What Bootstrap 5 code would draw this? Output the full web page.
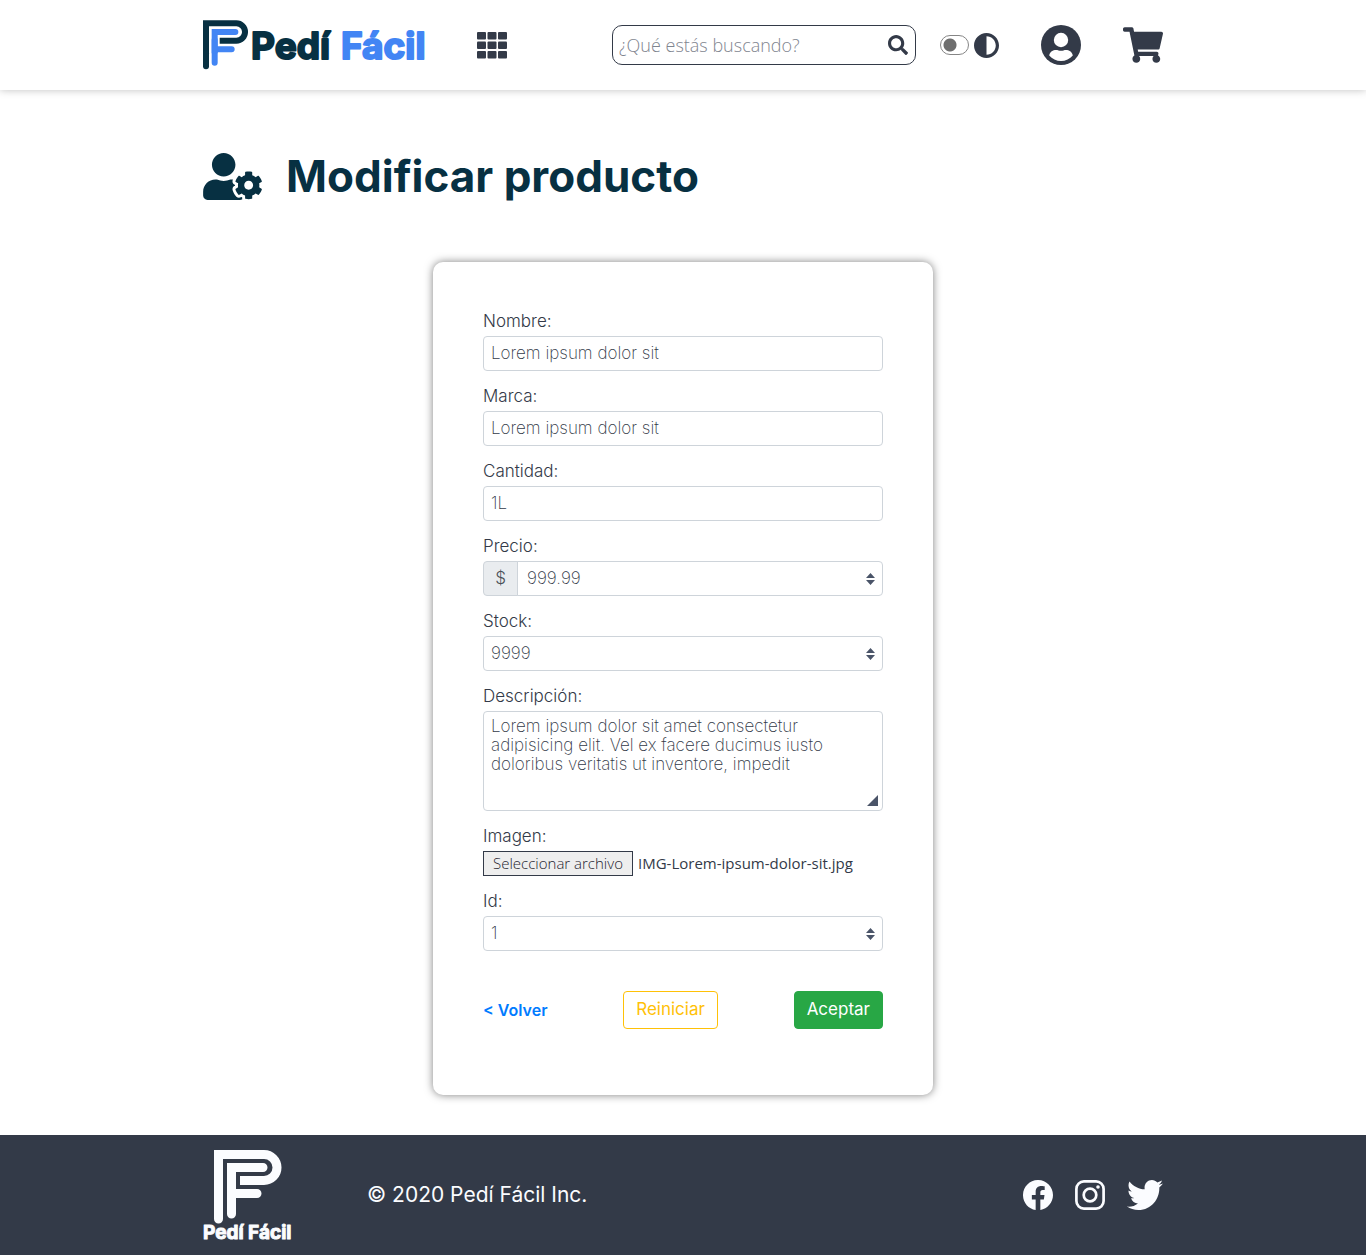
<!DOCTYPE html>
<html lang="es">
<head>
<meta charset="utf-8">
<meta name="viewport" content="width=device-width, initial-scale=1">
<title>Modificar producto - Pedí Fácil</title>
<link href="https://cdn.jsdelivr.net/npm/bootstrap@5.3.0/dist/css/bootstrap.min.css" rel="stylesheet">
<style>
  :root { --ink: #333a48; --navy: #073042; --brand: #4285f4; --paper: #fbfcff; }
  body { font-family: Inter, "Open Sans", sans-serif; font-size: 17px; color: var(--ink); background: #fff; }
  svg { display: block; flex: none; }
  .page-width { width: 100%; max-width: 984px; padding-inline: 12px; margin-inline: auto; }
  .site-header { min-height: 90px; box-shadow: 0 0 8px rgba(0,0,0,.25); }
  .site-header a, .site-header button { color: var(--ink); }
  .plain-btn { border: 0; background: none; padding: 0; }
  .wordmark { font-family: Inter, sans-serif; font-weight: 700; stroke-linejoin: round; }
  .search-box { width: 304px; height: 40px; border: 1px solid var(--ink); border-radius: 10px; padding: 0 7px 0 6px; }
  .search-box input { border: 0; outline: 0; background: none; min-width: 0; font-family: "Open Sans", sans-serif; font-weight: 300; font-size: 18px; padding: 0; }
  .search-box input::placeholder { color: #7f858f; opacity: 1; }
  .header-tools { gap: 42px; }
  .theme-toggle { gap: 5px; }
  .theme-toggle input { appearance: none; width: 29px; height: 20px; margin: 0; border: 1px solid #858585; border-radius: 10px; background: radial-gradient(circle at 9px 9px, #6e6e6e 6px, transparent 7px); }
  .page-title { color: var(--navy); gap: 24px; padding: 60px 0; }
  .page-title h1 { font-size: 44px; line-height: 52px; font-weight: 700; font-variant-ligatures: none; }
  .product-form { max-width: 500px; border-radius: 10px; padding: 49px 50px 66px; box-shadow: 0 0 8px rgba(0,0,0,.5); margin: 0 auto 40px; }
  .field { margin-bottom: 15px; }
  .field > label, .field-label { display: block; line-height: 21px; padding-bottom: 4px; font-weight: 300; }
  .field .form-control { height: 35px; padding: 0 7px 2px; border-color: #ced4da; border-radius: 4px; font-weight: 200; font-size: 17px; line-height: 19px; color: var(--ink); }
  .field textarea.form-control { height: 100px; padding-block: 5px; resize: none; display: block; }
  .field .input-group-text { width: 35px; padding: 0; justify-content: center; background: #e9ecef; border-color: #ced4da; border-radius: 4px; font-size: 17px; font-weight: 300; color: #495057; }
  .field .price-input { padding-left: 9px; border-radius: 0 4px 4px 0 !important; }
  input[type=number] { appearance: textfield; -moz-appearance: textfield; }
  input[type=number]::-webkit-inner-spin-button { appearance: none; margin: 0; }
  .stepper { position: absolute; right: 8px; top: 12px; z-index: 6; pointer-events: none; }
  .grip { position: absolute; right: 5px; bottom: 5px; pointer-events: none; }
  .file-row { font-family: "Open Sans", sans-serif; font-size: 15px; line-height: 23px; gap: 5px; }
  .file-row label { width: 150px; text-align: center; border: 1px solid var(--ink); background: #eee; font-weight: 300; color: #1f2530; white-space: nowrap; }
  .form-actions { margin-top: 40px; }
  .form-actions a { color: #007bff; font-weight: 600; font-size: 16px; text-decoration: none; }
  .form-actions .btn { height: 38px; padding: 0 12px 1px; border-radius: 4px; font-size: 17px; }
  .btn-reset { color: #ffc107; border-color: #ffc107; }
  .btn-accept { color: #fff; background: #28a745; border-color: #28a745; }
  .site-footer { background: var(--ink); color: var(--paper); min-height: 120px; }
  .site-footer a { color: var(--paper); }
  .copyright { font-size: 21px; margin-left: 72px; }
  .social-links { gap: 22px; }
</style>
<script src="https://cdn.jsdelivr.net/npm/bootstrap@5.3.0/dist/js/bootstrap.bundle.min.js" defer></script>
</head>
<body>
<header class="site-header d-flex align-items-center">
  <div class="page-width d-flex flex-wrap align-items-center justify-content-between row-gap-3">
    <div class="d-flex align-items-center gap-5">
      <a href="#" aria-label="Pedí Fácil">
        <svg width="226" height="50" viewBox="0 0 226 50">
          <g fill="none" stroke-width="9" transform="scale(.667)">
            <path stroke="#073042" d="M4.500 60V5H50a13 13 0 0 1 0 26H25"/>
            <path stroke="#073042" stroke-linecap="round" d="M4.500 50V69.500"/>
            <path stroke="#4285f4" stroke-linecap="round" d="M17.500 64V30M30 18H48.500M20 44H43"/>
            <path stroke="#4285f4" d="M17.500 50V18H35"/>
          </g>
          <g class="wordmark" font-size="37" stroke-width="2">
            <text x="48" y="39" fill="#073042" stroke="#073042">Pedí</text>
            <text x="138" y="39" fill="#4285f4" stroke="#4285f4">Fácil</text>
          </g>
        </svg>
      </a>
      <button class="plain-btn" type="button" aria-label="Categorías">
        <svg width="30" height="27" viewBox="0 0 30 27" fill="currentColor"><g id="r"><rect width="9" height="7.500" rx="1"/><rect x="10.500" width="9" height="7.500" rx="1"/><rect x="21" width="9" height="7.500" rx="1"/></g><use href="#r" y="9.500"/><use href="#r" y="19"/></svg>
      </button>
    </div>
    <div class="d-flex flex-wrap align-items-center">
      <form class="search-box d-flex align-items-center me-4" role="search">
        <input class="flex-grow-1" type="search" aria-label="Buscar" placeholder="¿Qué estás buscando?">
        <button class="plain-btn" type="button" aria-label="Buscar">
          <svg width="20" height="20" viewBox="0 0 512 512" fill="currentColor"><path d="M505 442.700L405.300 343c-4.500-4.500-10.600-7-17-7H372c27.600-35.300 44-79.700 44-128C416 93.100 322.900 0 208 0S0 93.100 0 208s93.100 208 208 208c48.300 0 92.700-16.400 128-44v16.300c0 6.400 2.500 12.500 7 17l99.700 99.700c9.400 9.400 24.600 9.400 33.900 0l28.300-28.300c9.400-9.400 9.400-24.600.1-34zM208 336c-70.700 0-128-57.200-128-128 0-70.700 57.200-128 128-128 70.700 0 128 57.200 128 128 0 70.700-57.200 128-128 128z"/></svg>
        </button>
      </form>
      <div class="header-tools d-flex align-items-center">
        <div class="theme-toggle d-flex align-items-center">
          <input type="checkbox" role="switch" id="tema">
          <label for="tema" aria-label="Modo oscuro"><svg width="25" height="25" viewBox="8 8 496 496" fill="currentColor"><path d="M8 256c0 136.966 111.033 248 248 248s248-111.034 248-248S392.966 8 256 8 8 119.033 8 256zm248 184V72c101.705 0 184 82.311 184 184 0 101.705-82.311 184-184 184z"/></svg></label>
        </div>
        <a href="#" aria-label="Mi cuenta">
          <svg width="40" height="40" viewBox="0 0 40 40"><circle cx="20" cy="20" r="20" fill="currentColor"/><circle cx="20" cy="15" r="7.200" fill="#fff"/><path fill="#fff" d="M8.200 30.500C9 26.500 12 25 15 25c2 0 3 .8 5 .8s3-.8 5-.8c3 0 6 1.500 6.800 5.500C29 34 24.500 36 20 36s-9-2-11.800-5.500z"/></svg>
        </a>
        <a href="#" aria-label="Carrito">
          <svg width="40" height="36" viewBox="0 0 576 512" fill="currentColor"><path d="M528.120 301.319l47.273-208C578.806 78.301 567.391 64 551.990 64H159.208l-9.166-44.810C147.758 8.021 137.930 0 126.529 0H24C10.745 0 0 10.745 0 24v16c0 13.255 10.745 24 24 24h69.883l70.248 343.435C147.325 417.100 136 435.222 136 456c0 30.928 25.072 56 56 56s56-25.072 56-56c0-15.674-6.447-29.835-16.824-40h209.647C430.447 426.165 424 440.326 424 456c0 30.928 25.072 56 56 56s56-25.072 56-56c0-22.172-12.888-41.332-31.579-50.405l5.517-24.276c3.413-15.018-8.002-29.319-23.403-29.319H218.117l-6.545-32h293.145c11.206 0 20.920-7.754 23.403-18.681z"/></svg>
        </a>
      </div>
    </div>
  </div>
</header>

<main class="page-width">
  <div class="page-title d-flex align-items-center">
    <svg width="59" height="47" viewBox="0 0 640 512" fill="currentColor" aria-hidden="true"><path d="M610.500 373.300c2.600-14.100 2.600-28.500 0-42.600l25.800-14.900c3-1.700 4.300-5.200 3.300-8.500-6.700-21.600-18.200-41.200-33.200-57.400-2.300-2.500-6-3.100-9-1.400l-25.800 14.900c-10.900-9.300-23.400-16.500-36.900-21.300v-29.800c0-3.400-2.400-6.400-5.700-7.100-22.300-5-45-4.800-66.200 0-3.300.7-5.700 3.700-5.700 7.100v29.800c-13.500 4.800-26 12-36.900 21.300l-25.800-14.900c-2.900-1.700-6.700-1.100-9 1.400-15 16.200-26.500 35.800-33.200 57.400-1 3.300.4 6.800 3.300 8.500l25.800 14.900c-2.600 14.100-2.600 28.500 0 42.600l-25.800 14.900c-3 1.700-4.300 5.200-3.300 8.500 6.700 21.600 18.200 41.100 33.200 57.400 2.300 2.500 6 3.100 9 1.400l25.800-14.900c10.900 9.300 23.400 16.500 36.900 21.300v29.800c0 3.400 2.400 6.400 5.700 7.100 22.300 5 45 4.800 66.200 0 3.300-.7 5.700-3.700 5.700-7.100v-29.800c13.500-4.800 26-12 36.900-21.300l25.800 14.900c2.900 1.700 6.700 1.100 9-1.400 15-16.200 26.500-35.800 33.200-57.400 1-3.300-.4-6.800-3.300-8.500l-25.800-14.900zM496 400.500c-26.800 0-48.500-21.800-48.500-48.500s21.800-48.500 48.500-48.500 48.500 21.800 48.500 48.500-21.700 48.500-48.500 48.500zM224 256c70.700 0 128-57.300 128-128S294.700 0 224 0 96 57.300 96 128s57.300 128 128 128zm201.200 226.500c-2.300-1.200-4.600-2.600-6.800-3.900l-7.900 4.600c-6 3.400-12.800 5.300-19.600 5.300-10.900 0-21.400-4.600-28.900-12.600-18.300-19.800-32.300-43.900-40.200-69.600-5.500-17.700 1.900-36.400 17.900-45.700l7.900-4.600c-.1-2.600-.1-5.200 0-7.800l-7.900-4.600c-16-9.200-23.400-28-17.900-45.700.9-2.900 2.200-5.800 3.200-8.700-3.800-.3-7.500-1.200-11.400-1.200h-16.700c-22.200 10.200-46.900 16-72.900 16s-50.600-5.800-72.900-16h-16.700C60.200 288 0 348.200 0 422.400V464c0 26.500 21.500 48 48 48h352c10.100 0 19.500-3.200 27.200-8.500-1.200-3.800-2-7.700-2-11.800v-9.200z"/></svg>
    <h1 class="mb-0">Modificar producto</h1>
  </div>

  <form class="product-form">
    <div class="field"><label for="nombre">Nombre:</label><input class="form-control" id="nombre" type="text" value="Lorem ipsum dolor sit"></div>
    <div class="field"><label for="marca">Marca:</label><input class="form-control" id="marca" type="text" value="Lorem ipsum dolor sit"></div>
    <div class="field"><label for="cantidad">Cantidad:</label><input class="form-control" id="cantidad" type="text" value="1L"></div>
    <div class="field"><label for="precio">Precio:</label>
      <div class="input-group"><span class="input-group-text">$</span><input class="form-control price-input" id="precio" type="number" step="0.01" value="999.99">
        <svg class="stepper" width="9" height="12" viewBox="0 0 9 12" fill="#4a5468"><path d="M4.500 0L9 5H0zM0 7h9l-4.500 5z"/></svg></div>
    </div>
    <div class="field"><label for="stock">Stock:</label>
      <div class="position-relative"><input class="form-control" id="stock" type="number" value="9999">
        <svg class="stepper" width="9" height="12" viewBox="0 0 9 12" fill="#4a5468"><path d="M4.500 0L9 5H0zM0 7h9l-4.500 5z"/></svg></div>
    </div>
    <div class="field"><label for="descripcion">Descripción:</label>
      <div class="position-relative"><textarea class="form-control" id="descripcion">Lorem ipsum dolor sit amet consectetur adipisicing elit. Vel ex facere ducimus iusto doloribus veritatis ut inventore, impedit</textarea>
        <svg class="grip" width="11" height="11" viewBox="0 0 11 11" fill="#4a5468"><path d="M11 0v11H0z"/></svg></div>
    </div>
    <div class="field"><span class="field-label">Imagen:</span>
      <div class="file-row d-flex"><input class="visually-hidden" type="file" id="imagen" accept="image/*"><label for="imagen">Seleccionar archivo</label><span class="align-self-center">IMG-Lorem-ipsum-dolor-sit.jpg</span></div>
    </div>
    <div class="field"><label for="ident">Id:</label>
      <div class="position-relative"><input class="form-control" id="ident" type="number" value="1">
        <svg class="stepper" width="9" height="12" viewBox="0 0 9 12" fill="#4a5468"><path d="M4.500 0L9 5H0zM0 7h9l-4.500 5z"/></svg></div>
    </div>
    <div class="form-actions d-flex align-items-center justify-content-between">
      <a href="#">&lt; Volver</a>
      <button class="btn btn-reset" type="reset">Reiniciar</button>
      <button class="btn btn-accept" type="submit">Aceptar</button>
    </div>
  </form>
</main>

<footer class="site-footer d-flex align-items-center">
  <div class="page-width d-flex flex-wrap align-items-center justify-content-between">
    <div class="d-flex align-items-center">
      <svg width="92" height="104" viewBox="0 -6 92 104">
        <g fill="none" stroke="#fbfcff" stroke-width="9" transform="translate(11 1)">
          <path d="M4.500 60V4.500H50a13 13 0 0 1 0 26H26"/>
          <path stroke-linecap="round" d="M4.500 50V69M17.500 64V30M30 17.500H49M20 43.500H43"/>
          <path d="M17.500 50V17.500H35"/>
        </g>
        <text class="wordmark" x="0" y="90" font-size="19" fill="#fbfcff" stroke="#fbfcff" stroke-width="1">Pedí Fácil</text>
      </svg>
      <span class="copyright">© 2020 Pedí Fácil Inc.</span>
    </div>
    <div class="social-links d-flex align-items-center">
      <a href="#" aria-label="Facebook"><svg width="30" height="30" viewBox="0 0 16 16" fill="currentColor"><path d="M16 8.049c0-4.446-3.582-8.050-8-8.050C3.580 0-.002 3.603-.002 8.050c0 4.017 2.926 7.347 6.750 7.951v-5.625h-2.030V8.050H6.750V6.275c0-2.017 1.195-3.131 3.022-3.131.876 0 1.791.157 1.791.157v1.980h-1.009c-.993 0-1.303.621-1.303 1.258v1.510h2.218l-.354 2.326H9.250V16c3.824-.604 6.750-3.934 6.750-7.951z"/></svg></a>
      <a href="#" aria-label="Instagram"><svg width="30" height="30" viewBox="0 0 30 30" fill="none" stroke="currentColor" stroke-width="2.700"><rect x="1.400" y="1.400" width="27.200" height="27.200" rx="7.500"/><circle cx="15" cy="15" r="6.300"/><circle cx="23" cy="7" r="1.800" fill="currentColor" stroke="none"/></svg></a>
      <a href="#" aria-label="Twitter"><svg width="36" height="30" viewBox="0 48 512 416" preserveAspectRatio="none" fill="currentColor"><path d="M459.370 151.716c.325 4.548.325 9.097.325 13.645 0 138.720-105.583 298.558-298.558 298.558-59.452 0-114.680-17.219-161.137-47.106 8.447.974 16.568 1.299 25.340 1.299 49.055 0 94.213-16.568 130.274-44.832-46.132-.975-84.792-31.188-98.112-72.772 6.498.974 12.995 1.624 19.818 1.624 9.421 0 18.843-1.300 27.614-3.573-48.081-9.747-84.143-51.980-84.143-102.985v-1.299c13.969 7.797 30.214 12.670 47.431 13.319-28.264-18.843-46.781-51.005-46.781-87.391 0-19.492 5.197-37.360 14.294-52.954 51.655 63.675 129.300 105.258 216.365 109.807-1.624-7.797-2.599-15.918-2.599-24.040 0-57.828 46.782-104.934 104.934-104.934 30.213 0 57.502 12.670 76.670 33.137 23.715-4.548 46.456-13.320 66.599-25.340-7.798 24.366-24.366 44.833-46.132 57.827 21.117-2.273 41.584-8.122 60.426-16.243-14.292 20.791-32.161 39.308-52.628 54.253z"/></svg></a>
    </div>
  </div>
</footer>
</body>
</html>
